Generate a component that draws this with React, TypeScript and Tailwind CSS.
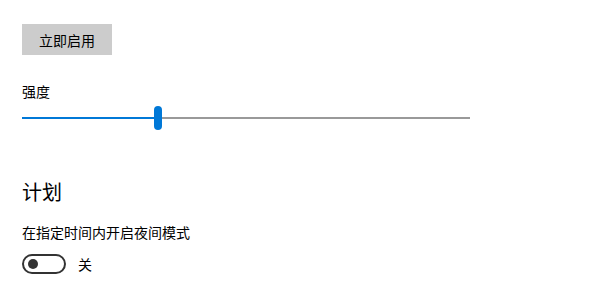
import React from "react";

export default function App() {
  return (
    <div
      className="w-[600px] h-[300px] bg-white text-black overflow-hidden pl-[22px] pt-[24px]"
      style={{ fontFamily: '"Noto Sans CJK SC", "Noto Sans", sans-serif' }}
    >
      <button className="w-[90px] h-[31px] bg-[#cccccc] text-[14px] leading-[20px] text-black">
        立即启用
      </button>
      <div className="mt-[26px] text-[14px] leading-[20px]">强度</div>
      <div className="relative mt-[5px] w-[448px] h-[24px] flex items-center">
        <div className="h-[2px] w-[132px] bg-[#0078d7]" />
        <div className="w-[8px] h-[24px] rounded-full bg-[#0078d7]" />
        <div className="h-[2px] flex-1 bg-[#999999]" />
      </div>
      <div className="mt-[48px] text-[20px] leading-[28px]">计划</div>
      <div className="mt-[16px] text-[14px] leading-[20px]">在指定时间内开启夜间模式</div>
      <div className="mt-[12px] flex items-center gap-[12px]">
        <div className="w-[44px] h-[20px] rounded-full border-2 border-[#333333] flex items-center pl-[4px]">
          <div className="w-[10px] h-[10px] rounded-full bg-[#333333]" />
        </div>
        <span className="text-[14px] leading-[20px]">关</span>
      </div>
    </div>
  );
}
